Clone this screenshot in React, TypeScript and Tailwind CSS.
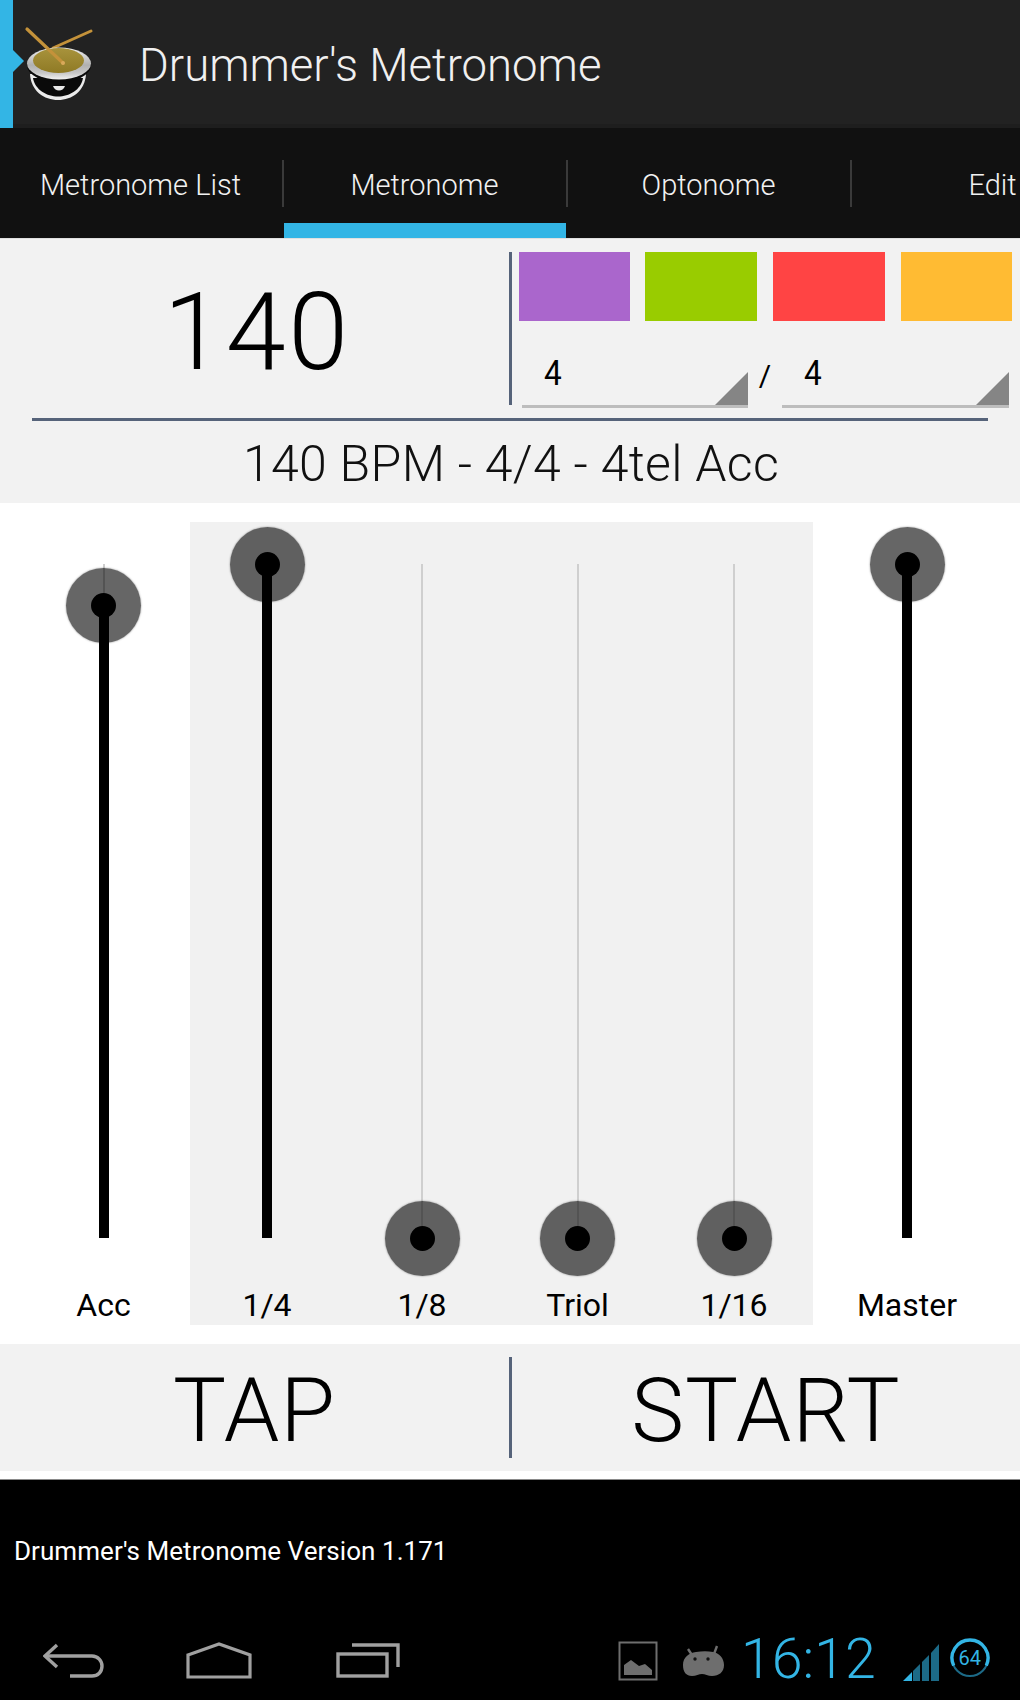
import React from "react";

const DrumIcon = () => (
  <svg width="72" height="80" viewBox="24 24 72 80" className="shrink-0">
    <defs>
      <linearGradient id="rim" x1="0" y1="0" x2="0" y2="1">
        <stop offset="0" stopColor="#f4f4f4" />
        <stop offset="0.55" stopColor="#b0b0b0" />
        <stop offset="0.8" stopColor="#c8c8c8" />
        <stop offset="1" stopColor="#f2f2f2" />
      </linearGradient>
      <linearGradient id="head" x1="0" y1="0" x2="0" y2="1">
        <stop offset="0" stopColor="#a8933c" />
        <stop offset="1" stopColor="#8f7a25" />
      </linearGradient>
    </defs>
    <path d="M91 31 L53 48" stroke="#c4923a" strokeWidth="3" strokeLinecap="round" />
    <path d="M30 74 C31 91 44 100 58 100 C72 100 85 91 86 74 Z" fill="#ececec" />
    <path d="M33 78 C35 90 47 96.5 58 96.5 C69 96.5 81 90 83 78 Z" fill="#0a0a0a" />
    <path d="M53 86 C55 92 63 92 65 86 Z" fill="#e9e9e9" />
    <ellipse cx="59" cy="65.5" rx="32" ry="16.5" fill="#0a0a0a" />
    <ellipse cx="59" cy="63.5" rx="32" ry="16" fill="url(#rim)" />
    <ellipse cx="58.5" cy="60.5" rx="25.5" ry="12.5" fill="url(#head)" />
    <path d="M27 29 L63 63" stroke="#c4923a" strokeWidth="3.2" strokeLinecap="round" />
    <circle cx="63" cy="63" r="2" fill="#d9a95a" />
  </svg>
);

const Tab = ({ label, active, divider }: { label: string; active?: boolean; divider?: boolean }) => (
  <div className="relative w-[284px] shrink-0 h-full flex items-center justify-center">
    <span className="text-[29px] font-light text-[#f2f2f2] pt-[6px] pr-[3px] whitespace-nowrap">{label}</span>
    {divider && <div className="absolute right-0 top-[32px] h-[47px] w-[2px] bg-[#3a3a3a]" />}
    {active && <div className="absolute left-0 bottom-0 right-[2px] h-[15px] bg-[#33b5e5]" />}
  </div>
);

const Swatch = ({ className }: { className: string }) => <div className={`h-[69px] ${className}`} />;

const Spinner = ({ className }: { className: string }) => (
  <div className={`relative h-[47px] border-b-[3px] border-[#bdbdbd] ${className}`}>
    <span className="absolute left-[21px] top-[-11px] text-[35px] leading-[48px] text-black scale-x-[0.9]">4</span>
    <svg width="33" height="33" viewBox="0 0 33 33" className="absolute right-0 bottom-0">
      <path d="M33 0 V33 H0 Z" fill="#858585" />
    </svg>
  </div>
);

const Slider = ({ label, value, className }: { label: string; value: number; className: string }) => {
  const y = (1 - value) * 674;
  return (
    <div className={`flex flex-col items-center shrink-0 ${className}`}>
      <div className="relative w-full h-[674px] mt-[42px]">
        <div className="absolute left-1/2 -ml-[1px] top-0 bottom-0 w-[2px] bg-[#cfcfcf]" />
        <div className="absolute left-1/2 -ml-[5px] bottom-0 w-[10px] bg-black" style={{ height: value * 674 }} />
        <div
          className="absolute left-1/2 -ml-[37.5px] -mt-[37.5px] w-[75px] h-[75px] rounded-full bg-black/60 shadow-[0_0_2px_rgba(0,0,0,0.45)]"
          style={{ top: y }}
        />
        <div className="absolute left-1/2 -ml-[12.5px] -mt-[12.5px] w-[25px] h-[25px] rounded-full bg-black" style={{ top: y }} />
      </div>
      <div className="mt-[49px] text-[32px] leading-[36px] text-black whitespace-nowrap">{label}</div>
    </div>
  );
};

const SignalIcon = () => (
  <svg width="36" height="40" viewBox="0 0 36 40" className="shrink-0">
    <path d="M0 40 L9 31 V40 Z" fill="#33b5e5" />
    <path d="M10 30 L17 23 V40 H10 Z" fill="#1c6a87" />
    <path d="M19 21 L26 14 V40 H19 Z" fill="#1c6a87" />
    <path d="M28 12 L36 3 V40 H28 Z" fill="#1c6a87" />
  </svg>
);

export default function App() {
  return (
    <div
      className="w-[1020px] h-[1700px] flex flex-col overflow-hidden bg-white"
      style={{ fontFamily: "Roboto, 'Noto Sans', sans-serif" }}
    >
      {/* Action bar */}
      <header className="h-[128px] shrink-0 bg-[#222222] shadow-[inset_0_-4px_0_#1e1e1e] flex items-center relative">
        <div className="w-[13px] self-stretch bg-[#33b5e5] relative shrink-0">
          <div className="absolute left-[13px] top-[50px] w-0 h-0 border-y-[11px] border-y-transparent border-l-[11px] border-l-[#33b5e5]" />
        </div>
        <div className="ml-[11px] self-start mt-[24px]">
          <DrumIcon />
        </div>
        <h1 className="ml-[43px] text-[45.5px] font-light text-[#f0f0f0] leading-none mt-[3px] whitespace-nowrap">
          Drummer's Metronome
        </h1>
      </header>

      {/* Tabs */}
      <nav className="h-[111px] shrink-0 bg-[#111111] flex overflow-hidden border-b-[1px] border-[#e0e0e0]">
        <Tab label="Metronome List" divider />
        <Tab label="Metronome" active divider />
        <Tab label="Optonome" divider />
        <Tab label="Edit" />
      </nav>

      {/* Tempo summary */}
      <section className="h-[264px] shrink-0 bg-[#f2f2f2] flex flex-col">
        <div className="flex h-[180px] pt-[13px] shrink-0">
          <div className="w-[509px] shrink-0 flex items-start justify-center pt-[26px]">
            <span className="text-[108px] font-light leading-none text-black ml-[5px] tracking-[2.5px]">140</span>
          </div>
          <div className="w-[3px] h-[153px] bg-[#56637a] shrink-0" />
          <div className="flex-1 pl-[7px] flex flex-col">
            <div className="flex gap-[15px]">
              <Swatch className="w-[111px] bg-[#aa66cc]" />
              <Swatch className="w-[112px] mr-[1px] bg-[#99cc00]" />
              <Swatch className="w-[112px] mr-[1px] bg-[#ff4444]" />
              <Swatch className="w-[111px] bg-[#ffbb33]" />
            </div>
            <div className="flex items-end mt-[40px] pl-[3px]">
              <Spinner className="w-[226px]" />
              <span className="w-[34px] text-center text-[30px] leading-[36px] text-black self-start -mt-[3px]">/</span>
              <Spinner className="w-[227px]" />
            </div>
          </div>
        </div>
        <div className="h-[3px] w-[956px] ml-[32px] bg-[#56637a] shrink-0 -mt-[1px]" />
        <div className="text-center text-[50px] font-light leading-[56px] text-[#111] mt-[15px] ml-[2px] tracking-[0.3px]">
          140 BPM - 4/4 - 4tel Acc
        </div>
      </section>

      {/* Sliders */}
      <section className="h-[841px] shrink-0 bg-white pl-[18px] pt-[19px] flex items-start">
        <Slider label="Acc" value={0.938} className="w-[171px] mr-[1px]" />
        <div className="w-[623px] h-[803px] bg-[#f1f1f1] flex shrink-0">
          <Slider label="1/4" value={1} className="w-[154px]" />
          <Slider label="1/8" value={0} className="w-[156px]" />
          <Slider label="Triol" value={0} className="w-[155px]" />
          <Slider label="1/16" value={0} className="w-[158px]" />
        </div>
        <Slider label="Master" value={1} className="w-[188px]" />
      </section>

      {/* Buttons */}
      <section className="h-[127px] shrink-0 bg-[#f2f2f2] flex items-center">
        <div className="w-[509px] text-center text-[89px] font-light leading-none text-black tracking-[1px] mt-[5px]">TAP</div>
        <div className="w-[3px] h-[101px] bg-[#56637a] shrink-0" />
        <div className="flex-1 text-center text-[89px] font-light leading-none text-black tracking-[1px] mt-[5px]">START</div>
      </section>
      <div className="h-[8px] shrink-0 bg-white" />

      {/* Footer */}
      <footer className="flex-1 bg-black border-t-[1px] border-[#8a8a8a] flex flex-col">
        <div className="pl-[14px] pt-[54px] text-[26px] leading-[34px] tracking-[0.05px] text-white whitespace-nowrap">
          Drummer's Metronome Version 1.171
        </div>
        <div className="mt-[68px] flex items-center pl-[43px] h-[50px]">
          <svg width="62" height="36" viewBox="0 0 62 36" fill="none" stroke="#a0a0a0" strokeWidth="3.4" className="shrink-0">
            <path d="M14 2 L2 13 L14 24" />
            <path d="M2 13 H49 C55 13 59 18 59 23 C59 29 55 33 49 33 H27" />
          </svg>
          <svg width="66" height="37" viewBox="0 0 66 37" fill="none" stroke="#a0a0a0" strokeWidth="3.2" className="ml-[81px] -mt-[2px] shrink-0">
            <path d="M2 13 L33 2 L64 13 V35 H2 Z" />
          </svg>
          <svg width="64" height="36" viewBox="0 0 64 36" fill="none" stroke="#a0a0a0" strokeWidth="3.4" className="ml-[84px] shrink-0">
            <rect x="2" y="11" width="49" height="22" />
            <path d="M16 2 H62 V24" />
          </svg>
          <svg width="40" height="40" viewBox="0 0 40 40" className="ml-[218px] shrink-0">
            <rect x="1.5" y="1.5" width="37" height="37" fill="none" stroke="#6e6e6e" strokeWidth="2" />
            <path d="M6 34 V24 L13 19 L21 25 L27 23 L34 29 V34 Z" fill="#6e6e6e" />
          </svg>
          <svg width="43" height="32" viewBox="0 0 43 32" className="ml-[24px] shrink-0">
            <path d="M1 20 C1 12 7 8 14 7 C20 6 26 6 31 7 C37 8 42 13 42 20 C42 27 37 31 30 31 C26 31 23 29 20 29 C17 29 14 31 10 31 C4 31 1 27 1 20 Z" fill="#6e6e6e" />
            <path d="M6 4 L10 10 M35 1 L32 9" stroke="#6e6e6e" strokeWidth="2.4" />
            <circle cx="13" cy="14" r="1.7" fill="#111" />
            <circle cx="26" cy="14" r="1.7" fill="#111" />
          </svg>
          <span className="ml-[16px] text-[55.5px] leading-none font-light text-[#33b5e5] -mt-[3px]">16:12</span>
          <div className="ml-[27px] flex"><SignalIcon /></div>
          <div className="relative w-[40px] h-[40px] ml-[11px] -mt-[6px] shrink-0 flex items-center justify-center">
            <svg width="40" height="40" viewBox="0 0 40 40" fill="none" className="absolute inset-0">
              <circle cx="20" cy="20" r="18" stroke="#1c6a87" strokeWidth="2" />
              <path d="M3.7 27.6 A18 18 0 1 1 36.3 27.6" stroke="#33b5e5" strokeWidth="3.4" />
            </svg>
            <span className="text-[20px] leading-none text-[#33b5e5]">64</span>
          </div>
        </div>
      </footer>
    </div>
  );
}
